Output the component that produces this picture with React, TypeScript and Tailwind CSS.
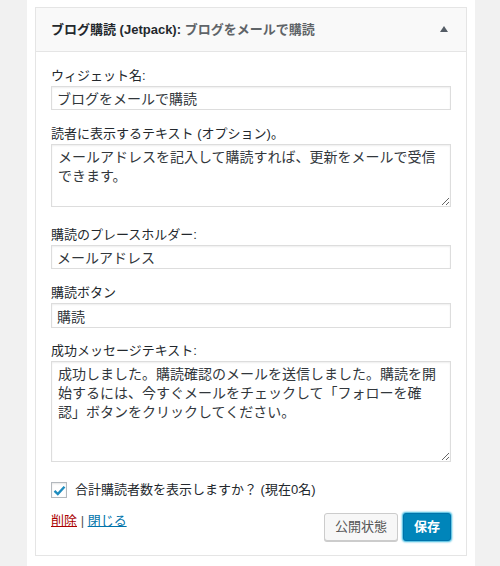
import React from 'react';

const font = "font-['Liberation_Sans','Noto_Sans_CJK_JP',sans-serif]";

function Label({ children }: { children: React.ReactNode }) {
  return <div className="block h-[18px] text-[13px] leading-[18px] text-[#23282d]">{children}</div>;
}

function TextInput({ value, tall }: { value: string; tall?: boolean }) {
  return (
    <input
      type="text"
      defaultValue={value}
      className={`mt-[1px] block w-full ${tall ? 'h-[25px]' : 'h-[24px]'} border border-[#dddddd] bg-white px-[5px] text-[14px] leading-[20px] text-[#32373c] shadow-[inset_0_1px_2px_rgba(0,0,0,0.07)] outline-none ${font}`}
    />
  );
}

function TextArea({ value, height }: { value: string; height: string }) {
  return (
    <textarea
      defaultValue={value}
      className={`mt-[1px] block w-full ${height} resize-y overflow-hidden border border-[#dddddd] bg-white pl-[6px] pr-[8px] py-[3px] text-[14px] leading-[19px] text-[#32373c] shadow-[inset_0_1px_2px_rgba(0,0,0,0.07)] outline-none [text-spacing-trim:space-all] ${font}`}
    />
  );
}

export default function App() {
  return (
    <div className={`flex h-[566px] w-[500px] bg-[#f1f1f1] pl-[27px] pr-[25px] ${font}`}>
      <div className="flex-1 bg-white px-[8px] pt-[7px]">
        <div className="border border-[#e5e5e5] bg-white">
          {/* widget header */}
          <div className="flex h-[44px] items-center justify-between border-b border-[#e5e5e5] bg-[#f9f9f9] pl-[15px] pr-[18px]">
            <h3 className="text-[13px] font-bold leading-[18px] text-[#23282d]">
              ブログ購読 (Jetpack):<span className="text-[#5f6468]"> ブログをメールで購読</span>
            </h3>
            <svg width="8" height="6" viewBox="0 0 8 6" className="mt-[-1px]">
              <path d="M4 0 L8 6 L0 6 Z" fill="#555d66" />
            </svg>
          </div>

          {/* widget body */}
          <div className="px-[15px] pb-[14px] pt-[15px]">
            <Label>ウィジェット名:</Label>
            <TextInput value="ブログをメールで購読" />

            <div className="mt-[15px]">
              <Label>読者に表示するテキスト (オプション)。</Label>
              <TextArea value="メールアドレスを記入して購読すれば、更新をメールで受信できます。" height="h-[63px]" />
            </div>

            <div className="mt-[19px]">
              <Label>購読のプレースホルダー:</Label>
              <TextInput value="メールアドレス" />
            </div>

            <div className="mt-[15px]">
              <Label>購読ボタン</Label>
              <TextInput value="購読" tall />
            </div>

            <div className="mt-[14px]">
              <Label>成功メッセージテキスト:</Label>
              <TextArea
                value="成功しました。購読確認のメールを送信しました。購読を開始するには、今すぐメールをチェックして「フォローを確認」ボタンをクリックしてください。"
                height="h-[101px]"
              />
            </div>

            <label className="mt-[20px] flex h-[16px] items-center gap-[8px]">
              <span className="flex h-[16px] w-[16px] items-center justify-center border border-[#b4b9be] bg-white shadow-[inset_0_1px_2px_rgba(0,0,0,0.1)]">
                <svg width="13" height="11" viewBox="0 0 13 11">
                  <path d="M1.5 5.8 L4.8 9 L11.5 1.8" fill="none" stroke="#1e8cbe" strokeWidth="2.4" strokeLinejoin="miter" />
                </svg>
              </span>
              <span className="text-[13px] leading-[18px] text-[#23282d]">合計購読者数を表示しますか？ (現在0名)</span>
            </label>

            {/* footer */}
            <div className="mt-[15px] flex items-start justify-between">
              <div className="mt-[-1px] text-[13px] leading-[18px]">
                <a href="#" className="text-[#a00] underline">削除</a>
                <span className="text-[#555]"> | </span>
                <a href="#" className="text-[#0073aa] underline">閉じる</a>
              </div>
              <div className="flex gap-[5px]">
                <button className="h-[28px] rounded-[3px] border border-[#cccccc] bg-[#f7f7f7] px-[10px] text-[13px] leading-[26px] text-[#555] shadow-[0_1px_0_#cccccc]">
                  公開状態
                </button>
                <button className="h-[28px] rounded-[3px] border border-[#0073aa] bg-[#0085ba] px-[10px] text-[13px] font-bold leading-[26px] text-white shadow-[0_0_2px_1px_#33b3db]">
                  保存
                </button>
              </div>
            </div>
          </div>
        </div>
      </div>
    </div>
  );
}
